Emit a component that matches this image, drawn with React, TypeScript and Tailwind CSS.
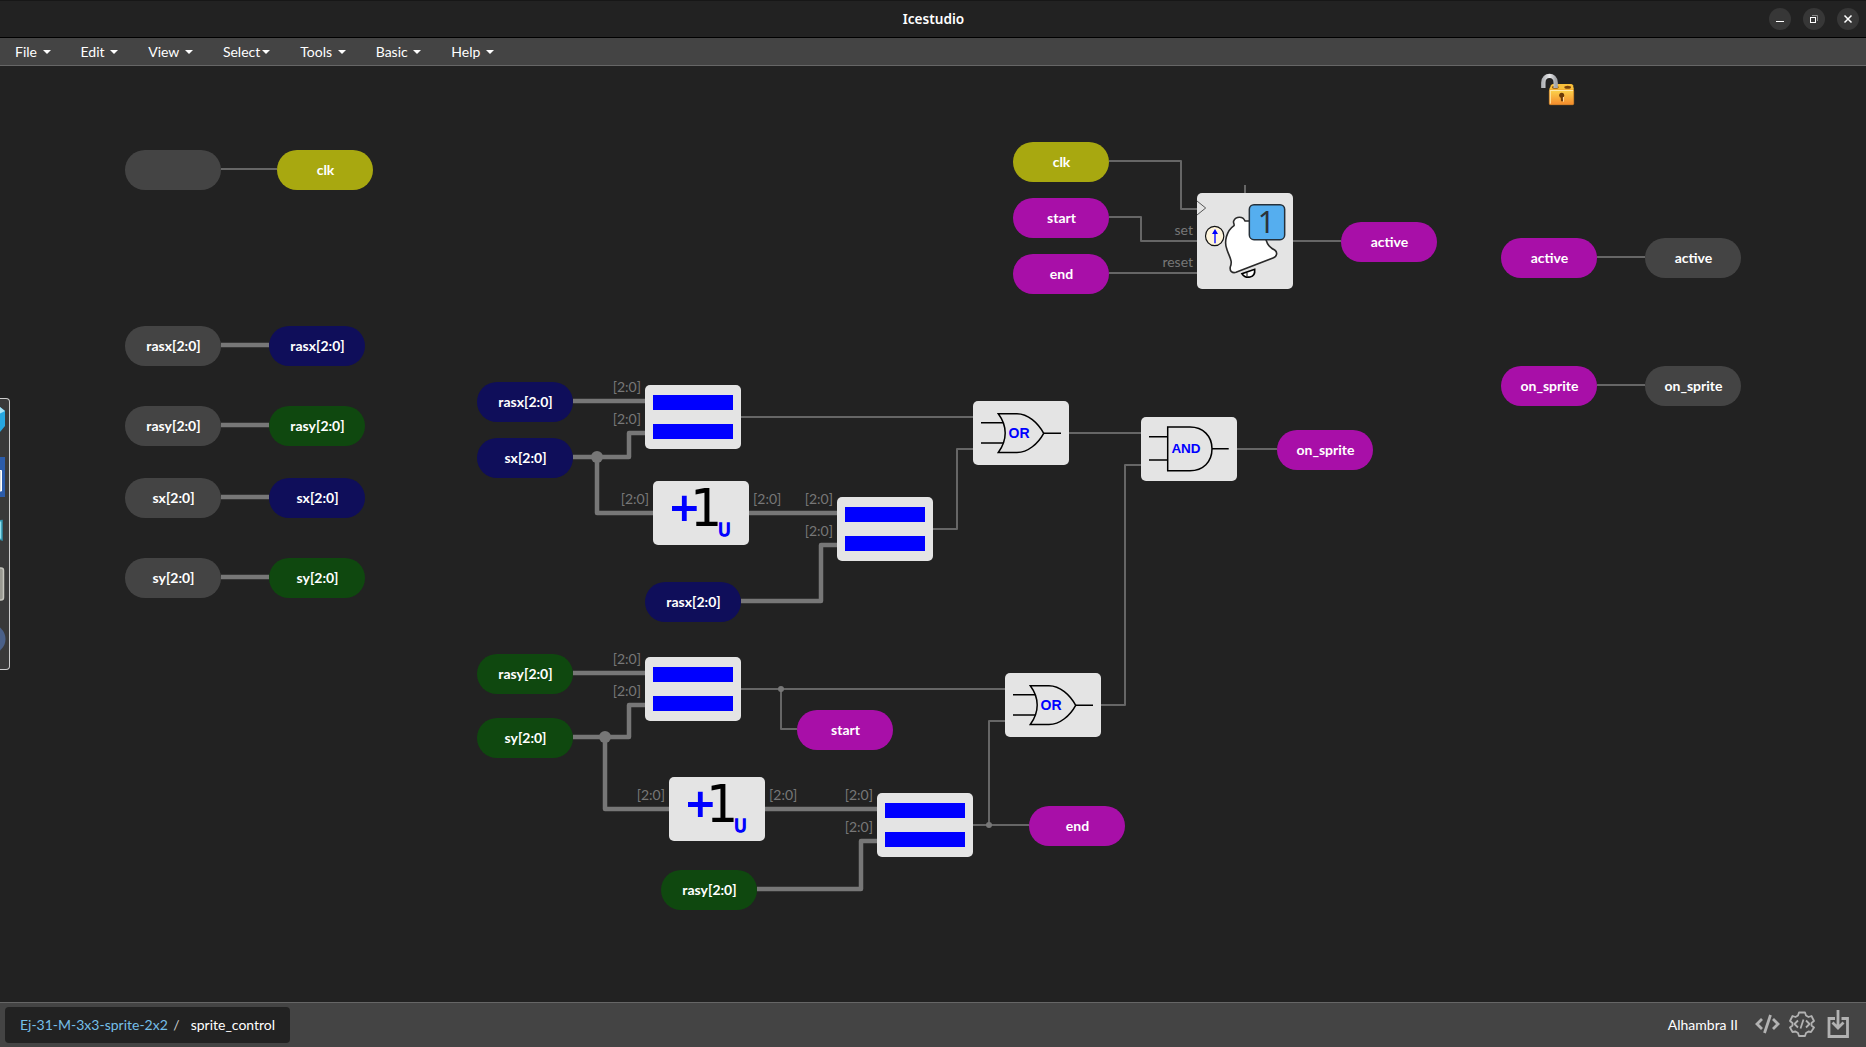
import type { ReactNode } from "react";

const CANVAS_TOP = 66;

const menus = [
  { label: "File", gap: true },
  { label: "Edit", gap: true },
  { label: "View", gap: true },
  { label: "Select", gap: false },
  { label: "Tools", gap: true },
  { label: "Basic", gap: true },
  { label: "Help", gap: true },
];

const tones = {
  gray: "bg-[#444444]",
  yellow: "bg-[#a8a810]",
  blue: "bg-[#0f0e5a]",
  green: "bg-[#0f480f]",
  magenta: "bg-[#a80fa8]",
};

type Tone = keyof typeof tones;

const pills: [number, number, string, Tone][] = [
  [125, 150, "", "gray"],
  [277, 150, "clk", "yellow"],
  [125, 326, "rasx[2:0]", "gray"],
  [269, 326, "rasx[2:0]", "blue"],
  [125, 406, "rasy[2:0]", "gray"],
  [269, 406, "rasy[2:0]", "green"],
  [125, 478, "sx[2:0]", "gray"],
  [269, 478, "sx[2:0]", "blue"],
  [125, 558, "sy[2:0]", "gray"],
  [269, 558, "sy[2:0]", "green"],
  [1013, 142, "clk", "yellow"],
  [1013, 198, "start", "magenta"],
  [1013, 254, "end", "magenta"],
  [1341, 222, "active", "magenta"],
  [1501, 238, "active", "magenta"],
  [1645, 238, "active", "gray"],
  [1501, 366, "on_sprite", "magenta"],
  [1645, 366, "on_sprite", "gray"],
  [477, 382, "rasx[2:0]", "blue"],
  [477, 438, "sx[2:0]", "blue"],
  [645, 582, "rasx[2:0]", "blue"],
  [1277, 430, "on_sprite", "magenta"],
  [477, 654, "rasy[2:0]", "green"],
  [477, 718, "sy[2:0]", "green"],
  [661, 870, "rasy[2:0]", "green"],
  [797, 710, "start", "magenta"],
  [1029, 806, "end", "magenta"],
];

const thinWires = [
  "M221 169H277",
  "M1109 161H1181V209H1197",
  "M1109 217H1141V241H1197",
  "M1109 273H1197",
  "M1245 185V193",
  "M1293 241H1341",
  "M1597 257H1645",
  "M1597 385H1645",
  "M741 417H973",
  "M933 529H957V449H973",
  "M1069 433H1141",
  "M1101 705H1125V465H1141",
  "M1237 449H1277",
  "M741 689H1005",
  "M781 689V729H797",
  "M973 825H1029",
  "M989 825V721H1005",
];

const busWires = [
  "M221 345H269",
  "M221 425H269",
  "M221 497H269",
  "M221 577H269",
  "M573 401H645",
  "M573 457H629V433H645",
  "M597 457V513H653",
  "M749 513H837",
  "M741 601H821V545H837",
  "M573 673H645",
  "M573 737H629V705H645",
  "M605 737V809H669",
  "M765 809H877",
  "M757 889H861V841H877",
];

const portLabels: [number, number, string, "start" | "end"][] = [
  [1193, 235, "set", "end"],
  [1193, 267, "reset", "end"],
  [641, 392, "[2:0]", "end"],
  [641, 424, "[2:0]", "end"],
  [649, 504, "[2:0]", "end"],
  [753, 504, "[2:0]", "start"],
  [833, 504, "[2:0]", "end"],
  [833, 536, "[2:0]", "end"],
  [641, 664, "[2:0]", "end"],
  [641, 696, "[2:0]", "end"],
  [665, 800, "[2:0]", "end"],
  [769, 800, "[2:0]", "start"],
  [873, 800, "[2:0]", "end"],
  [873, 832, "[2:0]", "end"],
];

function Wires() {
  return (
    <svg className="absolute inset-0" width="1866" height="936" viewBox="0 66 1866 936" fill="none">
      {thinWires.map((d) => (
        <path key={d} d={d} stroke="#666666" strokeWidth="2" strokeLinejoin="round" />
      ))}
      {busWires.map((d) => (
        <path key={d} d={d} stroke="#777777" strokeWidth="4.5" strokeLinejoin="round" />
      ))}
      <circle cx="597" cy="457" r="6" fill="#777777" />
      <circle cx="605" cy="737" r="6" fill="#777777" />
      <circle cx="781" cy="689" r="3" fill="#777777" />
      <circle cx="989" cy="825" r="3" fill="#777777" />
      {portLabels.map(([x, y, text, anchor]) => (
        <text key={`${x}-${y}`} x={x} y={y} textAnchor={anchor} fill="#777777" className="font-['Lato',sans-serif] text-[14px]">
          {text}
        </text>
      ))}
    </svg>
  );
}

function Pill({ x, y, text, tone }: { x: number; y: number; text: string; tone: Tone }) {
  return (
    <div
      className={`absolute flex h-10 w-24 items-center justify-center rounded-full pb-0.5 pl-px text-[14px] font-bold text-white ${tones[tone]}`}
      style={{ left: x, top: y - CANVAS_TOP }}
    >
      {text}
    </div>
  );
}

function Block({ x, y, tall, children }: { x: number; y: number; tall?: boolean; children: ReactNode }) {
  return (
    <div
      className={`absolute w-24 rounded-[5px] bg-[#e4e4e4] ${tall ? "h-24" : "h-16"}`}
      style={{ left: x, top: y - CANVAS_TOP }}
    >
      {children}
    </div>
  );
}

function Equals() {
  return (
    <div className="flex flex-col gap-3.5 px-2 pt-2.5">
      <div className="h-[15px] bg-[#0000ff]" />
      <div className="h-[15px] bg-[#0000ff]" />
    </div>
  );
}

function PlusOne() {
  return (
    <svg className="overflow-visible" width="96" height="64" viewBox="0 0 96 64">
      <path d="M31.3 14.7V40M19 27.5H43.7" stroke="#0000ff" strokeWidth="4.8" />
      <text x="37.1" y="45" fontSize="50.7" className="font-['DejaVu_Sans',sans-serif]">1</text>
      <text x="65.2" y="55" fontSize="16.8" fill="#0000ff" stroke="#0000ff" strokeWidth="1.3" className="font-['DejaVu_Sans',sans-serif]">
        U
      </text>
    </svg>
  );
}

function OrGate() {
  return (
    <svg width="96" height="64" viewBox="0 0 96 64" fill="none" stroke="#000" strokeWidth="1.5">
      <path d="M8 21.7H30M8 42H30M70.7 32.3H88" />
      <path d="M25.3 12.7H44C55 12.7 65 22 70.7 32.3C65 42.6 55 51.5 44 51.5H25.3C34.5 39 34.5 25 25.3 12.7Z" />
      <text x="46" y="36.9" textAnchor="middle" fontSize="14" fontWeight="700" fill="#0000ff" stroke="none" className="font-['Liberation_Sans',sans-serif]">
        OR
      </text>
    </svg>
  );
}

function AndGate() {
  return (
    <svg width="96" height="64" viewBox="0 0 96 64" fill="none" stroke="#000" strokeWidth="1.5">
      <path d="M8 19.7H26.7M8 43H26.7M71 31.7H87.7" />
      <path d="M26.7 10H49C62 10 71 19 71 31.8C71 45 62 53.7 49 53.7H26.7Z" />
      <text x="45" y="36" textAnchor="middle" fontSize="13.5" fontWeight="700" fill="#0000ff" stroke="none" className="font-['Liberation_Sans',sans-serif]">
        AND
      </text>
    </svg>
  );
}

function Bell() {
  return (
    <svg width="96" height="96" viewBox="0 0 288 288" fill="none">
      <g transform="translate(-591 -189)">
        <path d="M591 213L617 234L591 255" stroke="#555" strokeWidth="3" />
        <ellipse cx="644" cy="318" rx="27.5" ry="29" fill="#fff5dc" stroke="#111" strokeWidth="3.5" />
        <path d="M645 340V308" stroke="#3333ff" strokeWidth="5" />
        <path d="M645 297L654 312H636Z" fill="#0000ff" />
        <path
          d="M748 273H735C729 258 708 258 701 273C699 279 704 282 702 287C680 302 671 335 681 359C690 385 698 392 691 410C688 424 697 430 708 427L819 384C832 379 833 366 824 360C808 352 803 345 798 329L790 290Z"
          fill="#fff"
          stroke="#2a2a2a"
          strokeWidth="4.8"
          strokeLinejoin="round"
        />
        <path d="M726 431C737 447 767 446 764 418Z" fill="#fff" stroke="#000" strokeWidth="5" />
        <path d="M741 428V438" stroke="#000" strokeWidth="3" />
        <rect x="748" y="224" width="106" height="105" rx="14" fill="#55aeef" stroke="#25303a" strokeWidth="4.5" />
        <text x="799" y="309" textAnchor="middle" fontSize="90" fill="#2b3338" className="font-['Noto_Sans',sans-serif]">1</text>
      </g>
    </svg>
  );
}

function Padlock() {
  return (
    <svg className="absolute left-[1539px] top-[5px]" width="38" height="36" viewBox="0 0 114 108">
      <defs>
        <linearGradient id="lockBody" x1="0" y1="0" x2="0" y2="1">
          <stop offset="0" stopColor="#fbd44c" />
          <stop offset="1" stopColor="#f58a2c" />
        </linearGradient>
        <linearGradient id="shackle" x1="0" y1="0" x2="1" y2="0">
          <stop offset="0" stopColor="#b4b6ba" />
          <stop offset=".5" stopColor="#e8e8ea" />
          <stop offset="1" stopColor="#a4a6aa" />
        </linearGradient>
      </defs>
      <path d="M31 54L36 43Q38 39 43 39H96Q100 39 102 43L104 52V60H31Z" fill="#f9bf3a" />
      <ellipse cx="49" cy="49" rx="10" ry="4.5" fill="#8a5210" />
      <ellipse cx="86" cy="49" rx="10" ry="4.5" fill="#7a430c" />
      <rect x="31" y="57" width="73" height="44" rx="3" fill="url(#lockBody)" stroke="#e8912a" strokeWidth="2" />
      <path d="M33 58.5H102M34 58V98" stroke="#ffe9a8" strokeWidth="3" />
      <path d="M13 51V35C13 8 50 8 50 35V51" fill="none" stroke="url(#shackle)" strokeWidth="13" />
      <circle cx="68" cy="73" r="7.5" fill="#6b3b08" />
      <path d="M65 76H71L72 91H66Z" fill="#6b3b08" />
      <path d="M73.5 78V92" stroke="#ffd9a0" strokeWidth="3" />
    </svg>
  );
}

function SidePanel() {
  return (
    <div className="absolute left-0 top-[332px] h-[272px] w-2.5 overflow-hidden rounded-r-[4px] border border-l-0 border-[#cccccc] bg-[#393939]">
      <svg width="9" height="270" viewBox="0 399 9 270">
        <path d="M-8 412L0 407L5 411V426L0 432L-8 428Z" fill="#27a7e0" />
        <path d="M-8 412L0 407L5 411L-1 414Z" fill="#a9e4f7" />
        <rect x="-4" y="457" width="9" height="40" fill="#2c5caa" />
        <path d="M-4 470.5H1.5V491H-4Z" fill="#dcdcdc" stroke="#fff" />
        <path d="M-4 521L2 520.5V540L-4 538Z" fill="#8fe0ef" stroke="#2f93ad" strokeWidth="1.5" />
        <rect x="-12" y="568" width="15.5" height="32" rx="2.5" fill="#9a9a92" stroke="#c4c4bc" strokeWidth="1.5" />
        <circle cx="-9" cy="639" r="14.5" fill="#4a6088" />
      </svg>
    </div>
  );
}

function WindowButton({ children }: { children: ReactNode }) {
  return (
    <div className="flex size-[22px] items-center justify-center rounded-full bg-[#373737]">
      <svg width="22" height="22" viewBox="0 0 22 22" fill="none" stroke="#fff">
        {children}
      </svg>
    </div>
  );
}

export default function App() {
  return (
    <div className="flex h-[1047px] w-[1866px] flex-col overflow-hidden bg-[#222222] font-['Lato',sans-serif] text-[14px] text-white">
      <header className="grid h-[38px] grid-cols-[1fr_auto_1fr] items-center border-b border-t border-b-black border-t-[#171717]">
        <div />
        <h1 className="pl-px font-['Noto_Sans',sans-serif] text-[13.6px] font-semibold">Icestudio</h1>
        <div className="flex justify-end gap-3 pr-[7px]">
          <WindowButton>
            <path d="M7 13.5H15" />
          </WindowButton>
          <WindowButton>
            <path d="M9 7.5H14.5V13" stroke="#888" />
            <rect x="7.5" y="9.5" width="5" height="5" />
          </WindowButton>
          <WindowButton>
            <path d="M7.5 7.5L14.5 14.5M14.5 7.5L7.5 14.5" strokeWidth="1.5" />
          </WindowButton>
        </div>
      </header>

      <nav className="flex h-7 items-center gap-[30px] border-b border-[#666666] bg-[#444444] pl-[15px]">
        {menus.map((m) => (
          <div key={m.label} className="flex items-center">
            <span>{m.label}</span>
            <span
              className={`mt-px border-x-4 border-t-4 border-x-transparent border-t-white ${m.gap ? "ml-[5.6px]" : "ml-0.5"}`}
            />
          </div>
        ))}
      </nav>

      <main className="relative min-h-0 flex-1">
        <Wires />
        {pills.map(([x, y, text, tone]) => (
          <Pill key={`${x}-${y}`} x={x} y={y} text={text} tone={tone} />
        ))}
        <Block x={645} y={385}><Equals /></Block>
        <Block x={837} y={497}><Equals /></Block>
        <Block x={645} y={657}><Equals /></Block>
        <Block x={877} y={793}><Equals /></Block>
        <Block x={653} y={481}><PlusOne /></Block>
        <Block x={669} y={777}><PlusOne /></Block>
        <Block x={973} y={401}><OrGate /></Block>
        <Block x={1005} y={673}><OrGate /></Block>
        <Block x={1141} y={417}><AndGate /></Block>
        <Block x={1197} y={193} tall><Bell /></Block>
        <Padlock />
        <SidePanel />
      </main>

      <footer className="flex h-[45px] items-center justify-between border-t border-[#666666] bg-[#444444] pl-[5px] pr-[17px]">
        <div className="flex h-9 items-center rounded-[4px] bg-[#222222] px-[15px] pb-0.5">
          <span className="text-[#75bfe8]">Ej-31-M-3x3-sprite-2x2</span>
          <span className="px-[5.5px] text-[#cccccc]">/</span>
          <span className="pl-[5.5px]">sprite_control</span>
        </div>
        <div className="flex items-center pb-0.5">
          <span>Alhambra II</span>
          <svg className="ml-[17px]" width="25" height="28" viewBox="0 0 25 28" fill="none" stroke="#b2b2b2" strokeWidth="2.8">
            <path d="M7 9L2 14L7 19M18 9L23 14L18 19M15.5 5L9.5 23" />
          </svg>
          <svg className="ml-[9px]" width="26" height="28" viewBox="0 0 26 28" fill="none" stroke="#b2b2b2" strokeWidth="1.8" strokeLinejoin="round">
            <path d="M10 2.5H16L17 5.5L19.5 7L22.5 6L25 11L22.5 13V15.5L25 17.5L22 22L19.5 21.5L17 23L16 26H10L9 23L6.5 21.5L3.500 22L1 17.500L3.500 15.500V13L1 11L3.500 6L6.500 7L9 5.500Z" />
            <path d="M9 10.500L5.500 14L9 17.500M17 10.500L20.500 14L17 17.500M14.500 9.500L11.500 18.500" />
          </svg>
          <svg className="ml-3" width="22" height="30" viewBox="0 0 22 30" fill="none" stroke="#b2b2b2" strokeWidth="2.8">
            <path d="M8 9.500H2V27.500H20.500V9.500H14.500M11 1V19M5.500 13.500L11 19L16.500 13.500" />
          </svg>
        </div>
      </footer>
    </div>
  );
}
